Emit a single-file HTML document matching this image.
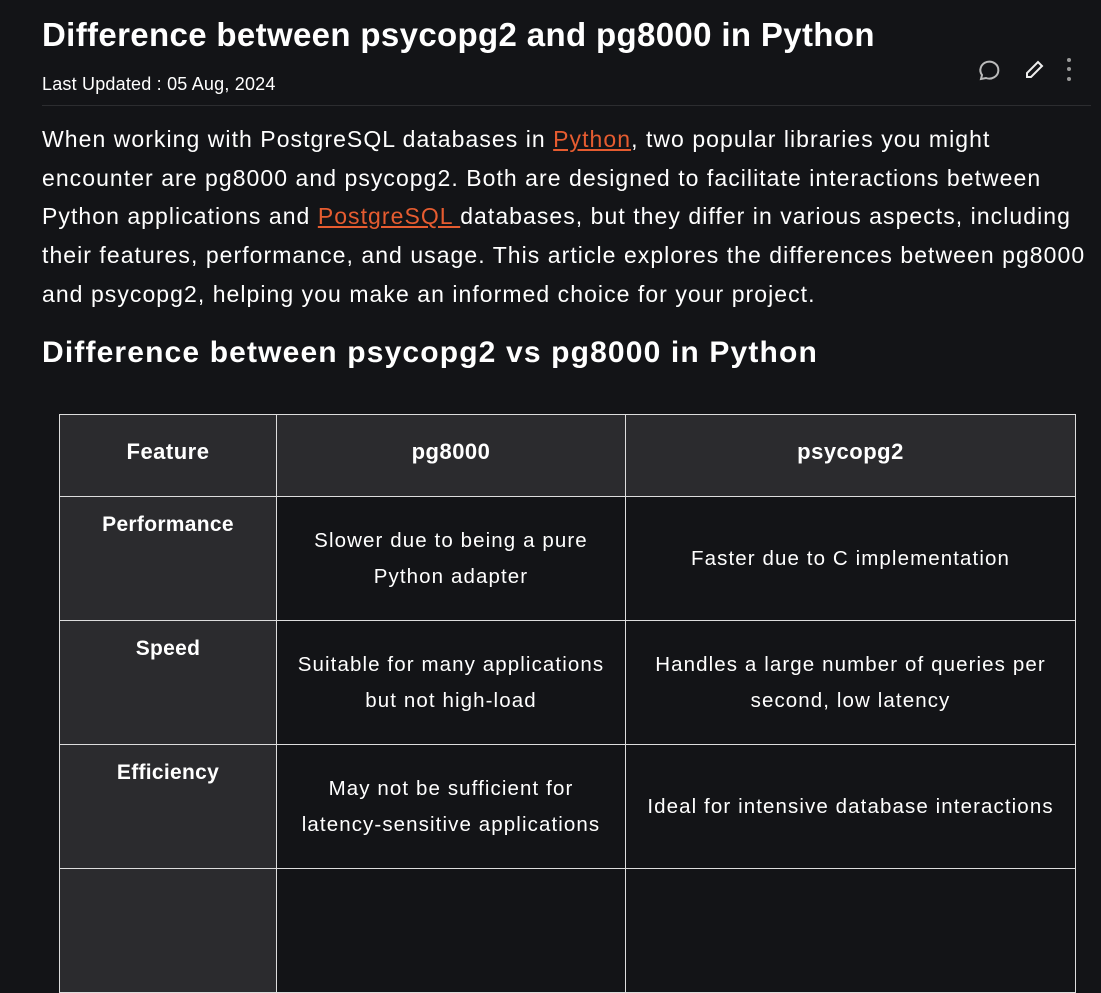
<!DOCTYPE html>
<html><head><style>
body{margin:0;background:#131417;color:#fff;font-family:"Liberation Sans",sans-serif;width:1101px;height:873px;overflow:hidden;position:relative}
h1{position:absolute;left:42px;top:16px;margin:0;font-size:33px;font-weight:bold;letter-spacing:0.35px;white-space:nowrap}
.upd{position:absolute;left:42px;top:74px;font-size:18px;letter-spacing:0.2px}
.hr{position:absolute;left:42px;right:10px;top:105px;height:1px;background:#2c2d30}
p{position:absolute;left:42px;top:120px;width:1070px;margin:0;font-size:23px;line-height:38.7px;letter-spacing:1.05px;white-space:nowrap}
a{color:#e65c30;text-decoration:underline}
h2{position:absolute;left:42px;top:336px;margin:0;font-size:30px;font-weight:bold;letter-spacing:1.15px}
table{position:absolute;left:59px;top:414px;border-collapse:collapse;width:1017px;font-size:20.5px;table-layout:fixed;letter-spacing:1.1px}
td,th{border:1px solid #ddd;text-align:center;line-height:36px;padding:0}
th{background:#2b2b2e;height:74px;font-size:22px;padding-bottom:7px;letter-spacing:0.5px}
td{height:123px}
td.f{background:#2b2b2e;font-weight:bold;font-size:21px;vertical-align:top;padding-top:10px;height:113px;letter-spacing:0.3px}
</style></head><body>
<h1>Difference between psycopg2 and pg8000 in Python</h1>
<div class="upd">Last Updated : 05 Aug, 2024</div>
<svg style="position:absolute;left:975px;top:58px" width="26" height="26" viewBox="0 0 26 26" fill="none" stroke="#bbb" stroke-width="2"><path d="M6 21 L7 17 A9 8.5 0 1 1 11 20 Z"/></svg>
<svg style="position:absolute;left:1024px;top:58px" width="22" height="22" viewBox="0 0 22 22" fill="none" stroke="#eee" stroke-width="2"><path d="M3 19 L3 15 L14 4 L18 8 L7 19 Z"/></svg>
<svg style="position:absolute;left:1064px;top:56px" width="10" height="26"><circle cx="5" cy="4" r="2" fill="#999"/><circle cx="5" cy="13" r="2" fill="#999"/><circle cx="5" cy="23" r="2" fill="#999"/></svg>
<div class="hr"></div>
<p>When working with PostgreSQL databases in <a>Python</a>, two popular libraries you might<br>encounter are pg8000 and psycopg2. Both are designed to facilitate interactions between<br>Python applications and <a>PostgreSQL </a>databases, but they differ in various aspects, including<br>their features, performance, and usage. This article explores the differences between pg8000<br>and psycopg2, helping you make an informed choice for your project.</p>
<h2>Difference between psycopg2 vs pg8000 in Python</h2>
<table>
<tr><th style="width:216px">Feature</th><th style="width:348px">pg8000</th><th>psycopg2</th></tr>
<tr><td class="f">Performance</td><td>Slower due to being a pure<br>Python adapter</td><td>Faster due to C implementation</td></tr>
<tr><td class="f">Speed</td><td>Suitable for many applications<br>but not high-load</td><td>Handles a large number of queries per<br>second, low latency</td></tr>
<tr><td class="f">Efficiency</td><td>May not be sufficient for<br>latency-sensitive applications</td><td>Ideal for intensive database interactions</td></tr>
<tr><td class="f"></td><td></td><td></td></tr>
</table>
</body></html>
